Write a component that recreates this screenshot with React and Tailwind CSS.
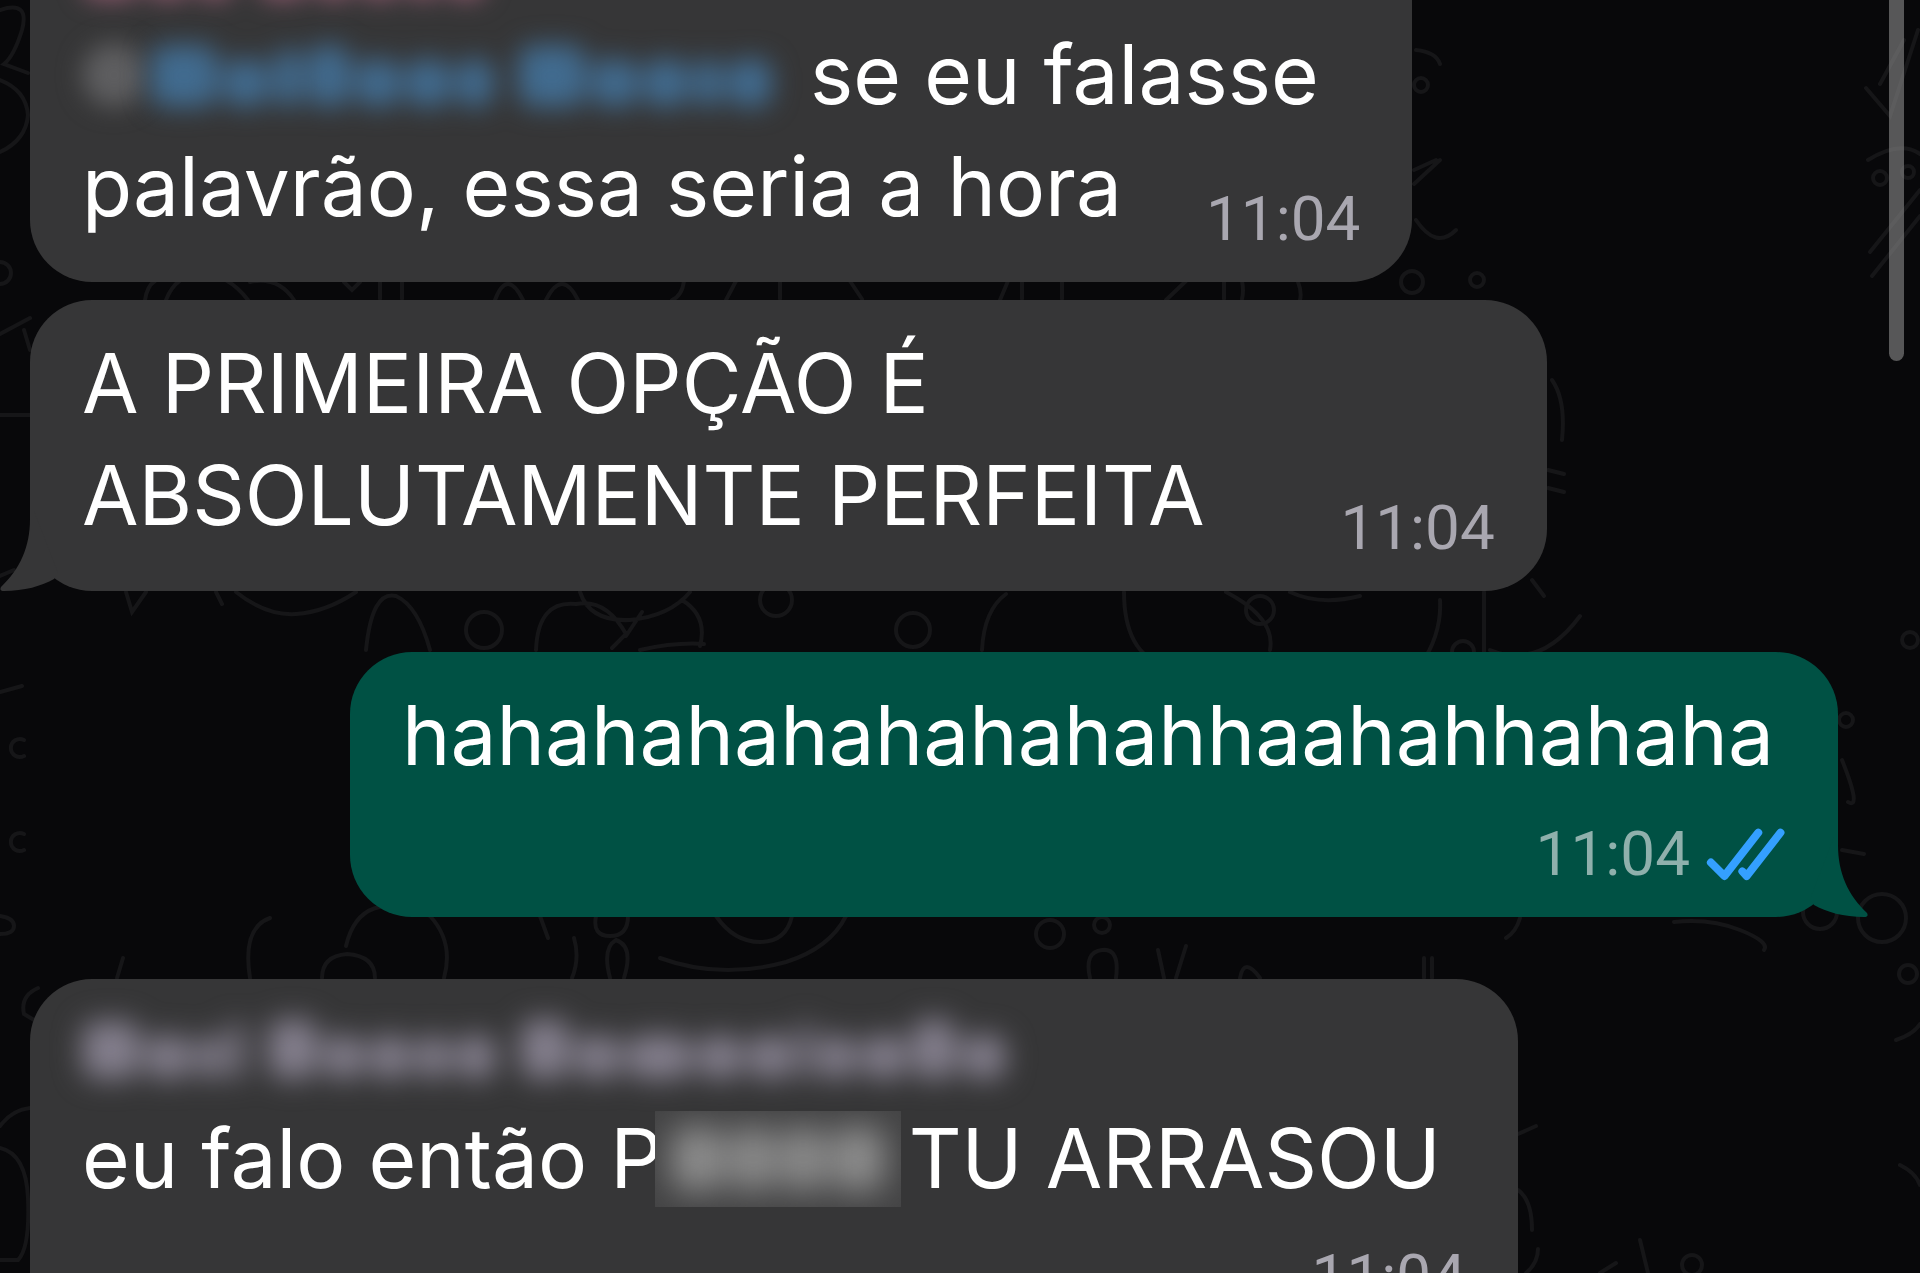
import clsx from 'clsx';

// Bars stand in for the letters of a hidden word: [width, height] in px
const WORDS = {
    sender: [
        [[58, 58], [44, 44], [26, 44], [16, 56]],
        [[50, 60], [40, 44], [40, 44], [34, 44], [40, 44]],
        [[50, 60], [44, 44], [66, 44], [44, 44], [44, 44], [14, 56], [38, 44], [44, 44], [44, 60], [44, 44]],
    ],
    pink: [
        [[58, 58], [44, 44], [38, 58]],
        [[50, 60], [40, 44], [40, 44], [34, 44], [40, 44]],
    ],
    mention: [
        [[68, 62], [44, 48], [28, 58], [42, 62], [44, 48], [44, 48], [38, 48]],
        [[68, 62], [46, 48], [44, 48], [28, 48], [44, 48]],
    ],
    censored: [[[54, 64], [44, 64], [44, 64], [54, 64]]],
};

function Redacted({ words, label, className, bar }) {
    return (
        <span role="img" aria-label={label} className={clsx('flex items-end gap-6', className)}>
            {words.map((word, i) => (
                <span key={i} className="flex items-end gap-[6px]">
                    {word.map(([width, height], j) => (
                        <span key={j} className={clsx('shrink-0 rounded-2xl', bar)} style={{ width, height }} />
                    ))}
                </span>
            ))}
        </span>
    );
}

function Tail({ side }) {
    return (
        <svg
            viewBox="0 0 60 80"
            aria-hidden="true"
            className={clsx(
                'absolute bottom-0 w-[60px] h-20',
                side === 'left' ? '-left-[30px] fill-[#363637]' : '-right-[30px] -scale-x-100 fill-[#005144]'
            )}
        >
            <path d="M30 0V8C30 36 20 58 1 76Q-1 80 4 80C24 80 42 75 54 68L58 62L34 0Z" />
        </svg>
    );
}

function ReadTicks() {
    return (
        <svg
            viewBox="686 192 240 160"
            role="img"
            aria-label="Lida"
            className="w-20 h-[53px]"
            fill="none"
            stroke="#34a0ff"
            strokeWidth="24"
            strokeLinecap="round"
            strokeLinejoin="round"
        >
            <path d="M700 296L741 337L843 206" />
            <path d="M795 323L808 337L910 206" />
        </svg>
    );
}

function Time({ className }) {
    return (
        <time dateTime="11:04" className={clsx("font-['Roboto',sans-serif] text-[62px] leading-[64px]", className)}>
            11:04
        </time>
    );
}

function Bubble({ out, tail, className, children }) {
    return (
        <article
            className={clsx(
                'relative shrink-0 rounded-[62px] pt-7 pb-[31px] pl-[52px] pr-[52px]',
                out ? 'self-end mr-[82px] bg-[#005144]' : 'ml-[30px] bg-[#363637]',
                className
            )}
        >
            {tail && <Tail side={out ? 'right' : 'left'} />}
            {children}
        </article>
    );
}

function Wallpaper() {
    return (
        <svg
            viewBox="0 0 1920 1273"
            preserveAspectRatio="xMidYMid slice"
            aria-hidden="true"
            className="absolute inset-0 size-full"
            fill="none"
            stroke="#161618"
            strokeWidth="4"
            strokeLinecap="round"
        >
            {/* left edge */}
            <path d="M0 10Q30 0 22 30Q14 56 4 64L28 73M0 80Q26 90 28 115Q26 140 0 152M0 262a11 11 0 1 1 0 22M0 334L30 318M24 330L30 350M0 415H30M0 576L14 570M0 692L22 686" />
            <path d="M24 740a9 9 0 1 0 0 16M24 834a9 9 0 1 0 0 16M0 916q14 2 14 10t-14 8M38 988q-18 8-14 26l10 6M0 1126q12-16 30-18M0 1148q26 6 28 50q2 50-10 62H0" />
            {/* between the first two bubbles */}
            <path d="M145 300q2-14 10-19M166 300q10-26 36-26t46 26M250 282q28-6 44 18M344 282l8 8 8-8M380 281v18M402 281v18M495 300q12-32 28 0M546 300q16-32 32 0M672 300q10-4 12-19M726 300l10-19M780 281v18M850 281l12 18M1000 300l8-19M1022 281v18M1062 281v18M1166 300l20-19M1224 281v18M1242 281q2 10 0 18M1300 300q2-8-2-18" />
            {/* below the second bubble */}
            <path d="M126 592l6 20 14-20M216 592l6 12M236 592q30 24 60 22t60-22M366 650q6-60 30-54q22 10 34 54M580 592q10 30 50 28q40-4 60-28M536 650q2-50 40-46q30-6 50 30l-14 14M626 636l16-24M640 650q36-8 64-6M682 600q26 16 18 46M982 650q2-40 24-56M1124 592q0 60 40 74q30 10 66-10q18-2 20 10M1226 592q50 26 44 58M1290 592q30 14 70 4M1440 600q2 34-20 66M1484 592v60M1490 650q50 20 90-34M1532 580l12 16" />
            <circle cx="484" cy="630" r="18" />
            <circle cx="776" cy="600" r="16" />
            <circle cx="913" cy="630" r="17" />
            <circle cx="1463" cy="652" r="11" />
            <circle cx="1260" cy="610" r="14" />
            {/* below the outgoing bubble */}
            <path d="M117 978l6-20M250 978q-8-50 20-60M346 946q14-60 84-30q24 26 14 62M322 978q0-22 25-24q28 2 28 24M540 916l8 22M572 978q8-20 2-40M596 916q-4 20 14 20t18-20M610 978q-8-30 6-38q18 6 8 38M716 916q18 26 44 26t32-26M660 958q60 22 126 4q44-14 60-46M1090 978q-6-26 12-28t14 28M1164 978l-6-28M1176 978l10-32M1240 978q4-22 20 0M1424 978v-20M1432 978v-20M1674 922q36-4 66 8t24 20M1520 918q-4 14-14 20" />
            <circle cx="1050" cy="934" r="14" />
            <circle cx="1102" cy="925" r="8" />
            <circle cx="1820" cy="912" r="17" />
            <circle cx="1882" cy="918" r="24" />
            {/* right side */}
            <path d="M1416 50q20 2 24 14M1414 170l22-10M1414 184l26-24M1416 220q20 30 40 10M1904 40L1880 84M1918 30L1890 116L1866 88M1868 160Q1900 140 1920 154M1872 276L1920 216M1870 252L1920 190M1552 380q14 20 10 60M1548 470l16 4M1548 488l16 4M1842 760q20 50 6 42M1842 850l22 4M1518 1134l18-8M1518 1190q14 10 14 40M1526 1273q12-10 12-24M1640 1240l8 33M1600 1273l16-10M1896 1040q18-6 24-16M1900 1165q16 8 20 20" />
            <circle cx="1421" cy="85" r="7" />
            <circle cx="1412" cy="282" r="11" />
            <circle cx="1477" cy="280" r="7" />
            <circle cx="1908" cy="172" r="6" />
            <circle cx="1880" cy="178" r="7" />
            <circle cx="1910" cy="640" r="8" />
            <circle cx="1846" cy="720" r="7" />
            <circle cx="1908" cy="974" r="9" />
            <circle cx="1692" cy="1265" r="10" />
        </svg>
    );
}

export default function App() {
    return (
        <div className="relative h-screen overflow-hidden bg-[#08080a] font-['Inter','Liberation_Sans',sans-serif] text-white">
            <Wallpaper />

            <main className="relative -mt-[105px] flex flex-col text-[82px] leading-[112px] whitespace-nowrap">
                <Bubble className="w-[72%]">
                    <div className="flex h-24 items-end pb-5">
                        <Redacted words={WORDS.pink} label="Nome oculto" className="blur-[12px]" bar="bg-[#8f5a6e]" />
                    </div>
                    <div className="flex items-center gap-2">
                        <div className="flex h-[112px] w-[720px] items-end gap-1 pb-6">
                            <span className="size-16 shrink-0 rounded-full bg-[#5e5e60] blur-[12px]" />
                            <Redacted words={WORDS.mention} label="Menção oculta" className="blur-[13px]" bar="bg-[#416b8f]" />
                        </div>
                        <p>se eu falasse</p>
                    </div>
                    <div className="flex items-end justify-between">
                        <p className="mb-2">palavrão, essa seria a hora</p>
                        <Time className="text-[#a9a7b0]" />
                    </div>
                </Bubble>

                <Bubble tail className="mt-[18px] w-[79%]">
                    <div className="flex items-end justify-between">
                        <p className="mb-2">
                            A PRIMEIRA OPÇÃO É<br />
                            ABSOLUTAMENTE PERFEITA
                        </p>
                        <Time className="text-[#a9a7b0]" />
                    </div>
                </Bubble>

                <Bubble out tail className="mt-[61px] w-[77.5%]">
                    <p>hahahahahahahahahhaahahhahaha</p>
                    <div className="mt-[30px] flex items-center justify-end gap-4">
                        <Time className="text-[#8fb0ac]" />
                        <ReadTicks />
                    </div>
                </Bubble>

                <Bubble className="mt-[62px] w-[77.5%]">
                    <div className="flex h-24 items-end pb-6">
                        <Redacted words={WORDS.sender} label="Nome oculto" className="blur-[14px]" bar="bg-[#837e8c]" />
                    </div>
                    <p className="flex items-center">
                        <span className="-mr-2">eu falo então P</span>
                        <span className="mr-2 flex h-24 w-[246px] items-center justify-center overflow-hidden bg-[#444445]">
                            <Redacted words={WORDS.censored} label="Palavra censurada" className="blur-[16px]" bar="bg-[#8c8c8c]" />
                        </span>
                        <span>TU ARRASOU</span>
                    </p>
                    <div className="mt-[30px] flex justify-end">
                        <Time className="text-[#a9a7b0]" />
                    </div>
                </Bubble>
            </main>

            {/* scrollbar thumb */}
            <div className="absolute top-0 right-4 h-[361px] w-[15px] rounded-b-full bg-[#8c8c8c]/60" />
        </div>
    );
}
